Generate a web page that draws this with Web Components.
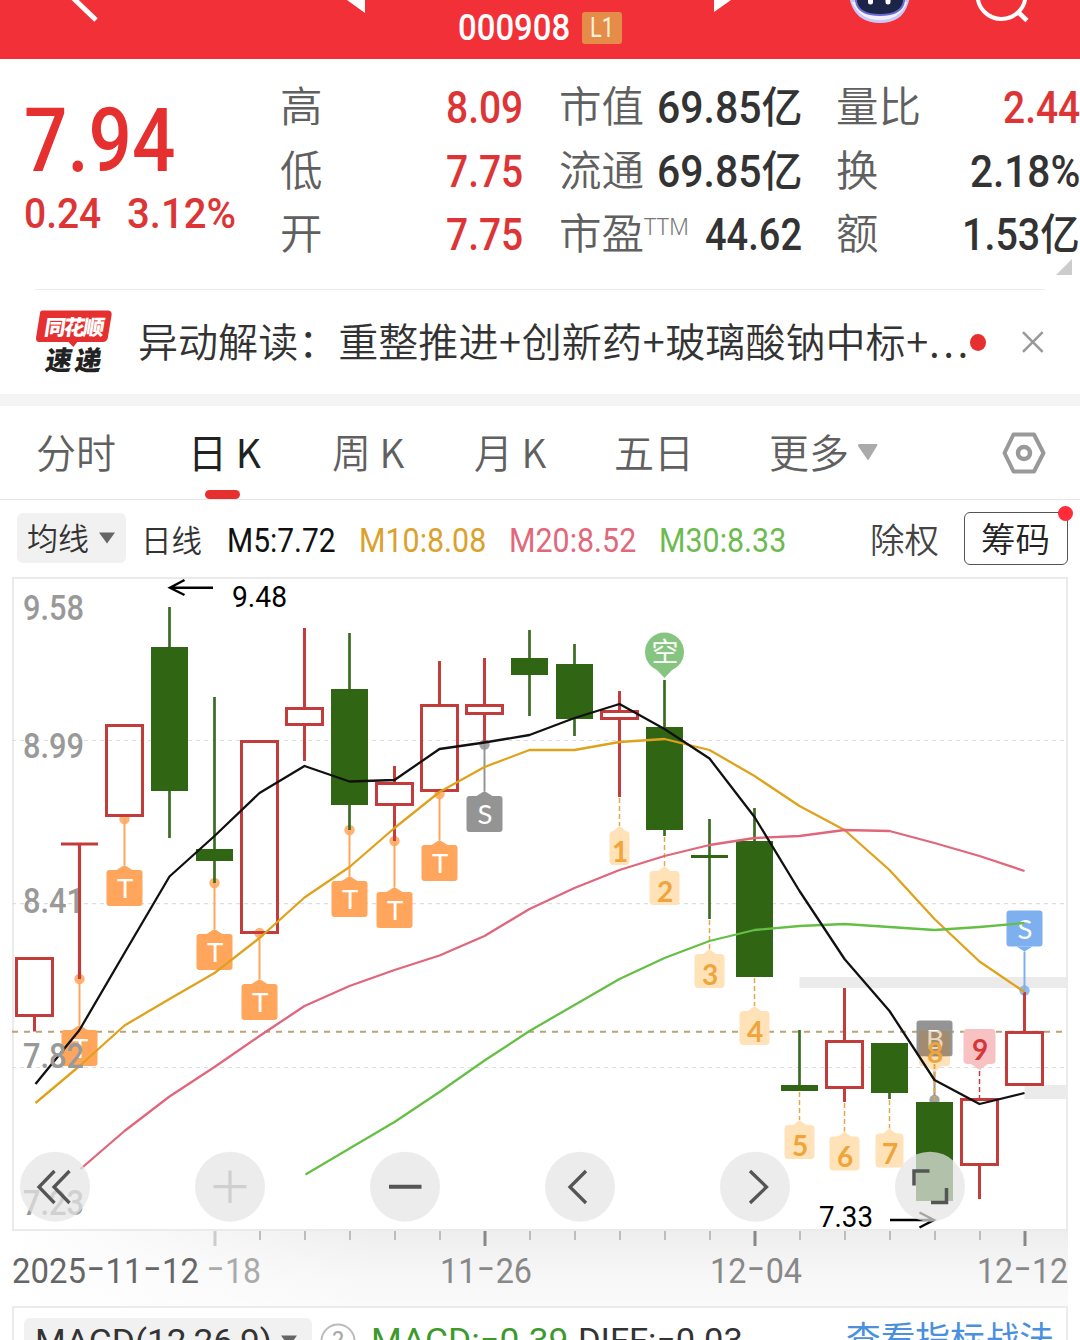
<!DOCTYPE html>
<html lang="zh-CN">
<head>
<meta charset="UTF-8">
<meta name="viewport" content="width=device-width, initial-scale=1.0">
<title>000908</title>
<style>
  html, body {
    margin: 0;
    padding: 0;
    background: #fff;
  }

  body {
    width: 1080px;
    height: 1340px;
    overflow: hidden;
    font-family: Roboto, "Noto Sans CJK SC", sans-serif;
    color: #333;
  }
</style>
</head>
<body>
<stock-page></stock-page>

<script>
// Text squeezed or stretched horizontally to a given width
class FitText extends HTMLElement {
  connectedCallback() {
    const width = Number(this.getAttribute("width"));
    this.attachShadow({ mode: "open" });
    this.shadowRoot.innerHTML = `
      <style>
        :host {
          display: block;
          flex: none;
          width: ${width}px;
          white-space: nowrap;
        }

        span {
          display: inline-block;
          transform-origin: 0 50%;
        }
      </style>
      <span><slot></slot></span>
    `;
    const span = this.shadowRoot.querySelector("span");
    span.style.transform = `scaleX(${width / span.offsetWidth})`;
  }
}

class AppBar extends HTMLElement {
  connectedCallback() {
    this.attachShadow({ mode: "open" });
    this.shadowRoot.innerHTML = `
      <style>
        :host {
          display: flex;
          height: 59px;
          background: #f23038;
          color: white;
          overflow: hidden;
        }

        svg {
          flex: none;
          height: 59px;
        }

        .title {
          display: flex;
          align-items: center;
          gap: 12px;
          width: 164px;
          height: 32px;
          margin: 12px 88px 0;
          font-size: 37px;
          font-weight: 500;
          line-height: 34px;
        }

        .level {
          width: 40px;
          height: 32px;
          border-radius: 3px;
          background: #e58c49;
          color: #fff3dc;
          font-size: 28px;
          font-weight: 400;
          line-height: 32px;
          display: flex;
          justify-content: center;
        }
      </style>

      <svg width="100" viewBox="0 0 100 59"><path d="M71 -4 L96 20" stroke="#fff" stroke-width="5" fill="none"/></svg>
      <svg width="30" viewBox="340 0 30 59" style="margin-left:240px"><path d="M347 0 H365 V13Z" fill="#fff"/></svg>
      <div class="title">
        <fit-text width="112">000908</fit-text>
        <span class="level"><fit-text width="24">L1</fit-text></span>
      </div>
      <svg width="25" viewBox="710 0 25 59"><path d="M714 0 H731 L714 12Z" fill="#fff"/></svg>
      <svg width="70" viewBox="845 0 70 59" style="margin-left:110px">
        <path d="M847 -10 L851 4 Q858 23 880 23 Q902 23 908 4 L912 -10Z" fill="#c9c8fa"/>
        <path d="M852 2 Q860 20 880 20 Q900 20 907 2Z" fill="#f3efff"/>
        <path d="M855 -10 V1 Q857 16 880 16 Q903 16 905 1 V-10Z" fill="#6a6ccf"/>
        <path d="M857 -10 V1 Q859 14 880 14 Q901 14 903 1 V-10Z" fill="#1c2448"/>
        <path d="M870.5 -3 V2 M888 -3 V2" stroke="#fff" stroke-width="5" stroke-linecap="round"/>
      </svg>
      <svg width="60" viewBox="975 0 60 59" style="margin-left:60px">
        <circle cx="1001.5" cy="-5" r="24" fill="none" stroke="#fff" stroke-width="4"/>
        <path d="M1017 11 L1027 20.5" stroke="#fff" stroke-width="4.5"/>
      </svg>
    `;
  }
}

class QuoteBoard extends HTMLElement {
  connectedCallback() {
    this.attachShadow({ mode: "open" });
    this.shadowRoot.innerHTML = `
      <style>
        :host {
          display: grid;
          grid-template-columns: 220px 243px 243px 243px;
          column-gap: 36px;
          height: 230px;
          box-sizing: border-box;
          padding: 16px 0 0 24px;
          position: relative;
        }

        .red { color: #dd3536; }

        .price {
          font-weight: 500;
          color: #e63030;
          line-height: 82px;
          padding-top: 25px;
          font-size: 89px;
        }

        .change {
          display: flex;
          gap: 26px;
          font-size: 43px;
          font-weight: 500;
          line-height: 62px;
          color: #dd3536;
        }

        .row {
          display: flex;
          justify-content: space-between;
          height: 63.5px;
          line-height: 67px;
          font-size: 43.5px;
          font-weight: 500;
        }

        .label {
          font-family: "Noto Sans CJK SC", sans-serif;
          font-size: 42.5px;
          font-weight: 350;
          color: #606060;
          line-height: 58px;
          display: flex;
        }

        sup {
          font-family: "Noto Sans", sans-serif;
          font-size: 23px;
          line-height: 49px;
          vertical-align: baseline;
          color: #777;
        }

        .corner {
          position: absolute;
          right: 8px;
          bottom: 14px;
          width: 0;
          height: 0;
          border-left: 16px solid transparent;
          border-bottom: 16px solid #ccc;
        }
      </style>

      <div>
        <div class="price"><fit-text width="151">7.94</fit-text></div>
        <div class="change"><fit-text width="77">0.24</fit-text><fit-text width="109">3.12%</fit-text></div>
      </div>
      <div>
        <div class="row"><span class="label">高</span><fit-text class="red" width="77">8.09</fit-text></div>
        <div class="row"><span class="label">低</span><fit-text class="red" width="77">7.75</fit-text></div>
        <div class="row"><span class="label">开</span><fit-text class="red" width="77">7.75</fit-text></div>
      </div>
      <div>
        <div class="row"><span class="label">市值</span><fit-text width="145">69.85亿</fit-text></div>
        <div class="row"><span class="label">流通</span><fit-text width="145">69.85亿</fit-text></div>
        <div class="row"><span class="label">市盈<sup><fit-text width="45">TTM</fit-text></sup></span><fit-text width="97">44.62</fit-text></div>
      </div>
      <div style="margin-left:-2px;margin-right:1px">
        <div class="row"><span class="label">量比</span><fit-text class="red" width="77">2.44</fit-text></div>
        <div class="row"><span class="label">换</span><fit-text width="110">2.18%</fit-text></div>
        <div class="row"><span class="label">额</span><fit-text width="118">1.53亿</fit-text></div>
      </div>
      <i class="corner"></i>
    `;
  }
}

class NewsFlash extends HTMLElement {
  connectedCallback() {
    this.attachShadow({ mode: "open" });
    this.shadowRoot.innerHTML = `
      <style>
        :host {
          display: block;
          height: 105px;
          border-bottom: 12px solid #f4f4f4;
        }

        .line {
          display: flex;
          align-items: center;
          height: 104px;
          margin: 0 35px;
          border-top: 1px solid #ececec;
        }

        fit-text {
          margin: -4px 0 0 25px;
          font-family: "Noto Sans CJK SC", sans-serif;
          font-size: 40px;
          font-weight: 350;
          line-height: 60px;
        }

        .plus { padding: 0 0.7px; }

        .dots { letter-spacing: 3.5px; }

        .dot {
          width: 17px;
          height: 17px;
          border-radius: 50%;
          background: #e63030;
          margin-left: -2px;
        }

        .close { margin-left: 35px; }
      </style>

      <div class="line">
        <svg width="79" height="70" viewBox="35 307 79 70">
          <path d="M43 310 H109 Q113 310 113 314 L109 338 Q108 342 104 342 H78 L74 347 L69 342 H39 Q36 342 36 338 L40 313 Q40 310 43 310Z" fill="#e63030"/>
          <g font-family="'Noto Sans CJK SC', sans-serif" font-weight="900" transform="skewX(-9)">
            <text x="96.5" y="334.5" font-size="21.5" fill="#fff" textLength="61">同花顺</text>
            <text x="103" y="370" font-size="27" fill="#222" textLength="57">速递</text>
          </g>
        </svg>
        <fit-text width="834">异动解读：重整推进<span class="plus">+</span>创新药<span class="plus">+</span>玻璃酸钠中标<span class="plus">+</span><span class="dots">...</span></fit-text>
        <i class="dot"></i>
        <svg class="close" width="24" height="24" viewBox="0 0 24 24"><path d="M2 2 L22 22 M22 2 L2 22" stroke="#999" stroke-width="2.6"/></svg>
      </div>
    `;
  }
}

class PeriodTabs extends HTMLElement {
  connectedCallback() {
    this.attachShadow({ mode: "open" });
    this.shadowRoot.innerHTML = `
      <style>
        :host {
          display: flex;
          height: 93px;
          border-bottom: 1px solid #e6e6e6;
          padding-left: 36px;
          font-family: "Noto Sans CJK SC", sans-serif;
          font-size: 40px;
          font-weight: 350;
          line-height: 90px;
          color: #606060;
        }

        .tab {
          display: flex;
          flex-direction: column;
          align-items: center;
          height: 93px;
        }

        .active {
          color: #222;
          font-weight: 400;
        }

        .active::after {
          content: "";
          width: 35px;
          height: 9px;
          margin: -6px 5px 0 0;
          border-radius: 5px;
          background: #e63030;
        }

        svg { flex: none; }
      </style>

      <span class="tab" style="width:80px"><fit-text width="80">分时</fit-text></span>
      <span class="tab active" style="margin-left:72px"><fit-text width="73">日 K</fit-text></span>
      <span class="tab" style="margin-left:71px"><fit-text width="72">周 K</fit-text></span>
      <span class="tab" style="margin-left:70px"><fit-text width="72">月 K</fit-text></span>
      <span class="tab" style="margin-left:68px"><fit-text width="80">五日</fit-text></span>
      <span class="tab" style="margin-left:75px"><fit-text width="80">更多</fit-text></span>
      <svg width="20" height="93" viewBox="0 0 20 93" style="margin-left:9px"><path d="M1 38 H19 Q20 38 19 40 L11 53 Q10 55 9 53 L0 40 Q0 38 1 38Z" fill="#aaa"/></svg>
      <svg width="46" height="93" viewBox="1001 406 46 93" style="margin-left:123px" fill="none" stroke="#999">
        <path d="M1013.5 434.5 H1034 L1043.5 453 L1034 471.5 H1013.5 L1004.5 453Z" stroke-width="4" stroke-linejoin="round"/>
        <circle cx="1024" cy="453" r="6" stroke-width="4.5"/>
      </svg>
    `;
  }
}

class MaLegend extends HTMLElement {
  connectedCallback() {
    this.attachShadow({ mode: "open" });
    this.shadowRoot.innerHTML = `
      <style>
        :host {
          display: flex;
          align-items: flex-start;
          height: 64px;
          padding: 13px 12px 0 17px;
          line-height: 56px;
          font-size: 33px;
          font-weight: 450;
        }

        .cjk {
          font-family: "Noto Sans CJK SC", sans-serif;
          font-weight: 350;
        }

        .picker {
          display: flex;
          align-items: center;
          width: 109px;
          height: 50px;
          box-sizing: border-box;
          padding-left: 10px;
          gap: 9px;
          border-radius: 6px;
          background: #f1f1f1;
          font-size: 31px;
        }

        .chips {
          position: relative;
          box-sizing: border-box;
          width: 104px;
          height: 53px;
          margin: -1px 0 0 25px;
          padding-left: 16px;
          border: 1.5px solid #555;
          border-radius: 6px;
          font-size: 34px;
          line-height: 50px;
          color: #222;
        }

        .chips i {
          position: absolute;
          top: -7px;
          right: -6px;
          width: 15px;
          height: 15px;
          border-radius: 50%;
          background: #ff2b39;
        }
      </style>

      <div class="picker cjk"><fit-text width="62" style="line-height:46px;margin-top:-2px">均线</fit-text>
        <svg width="18" height="12" viewBox="0 0 18 12"><path d="M1 0.5 H17 L9 11.5Z" fill="#666"/></svg>
      </div>
      <fit-text class="cjk" width="61" style="margin-left:15px;font-size:31px;line-height:52px">日线</fit-text>
      <fit-text width="109" style="margin-left:25px;color:#111">M5:7.72</fit-text>
      <fit-text width="127" style="margin-left:23px;color:#dba12b">M10:8.08</fit-text>
      <fit-text width="127" style="margin-left:23px;color:#e1687b">M20:8.52</fit-text>
      <fit-text width="127" style="margin-left:23px;color:#6cba50">M30:8.33</fit-text>
      <fit-text class="cjk" width="69" style="margin-left:84px;font-size:34px;line-height:51px;color:#444">除权</fit-text>
      <div class="chips cjk"><fit-text width="69">筹码</fit-text><i></i></div>
    `;
  }
}

// [type, high, body top, body bottom, low], one entry per trading day
const CANDLES = [
  ["up", 957, 957, 1017, 1031.5],
  ["flat", 842, 842, 846, 979],
  ["up", 724, 724, 817, 817],
  ["down", 607, 647, 791, 838],
  ["down", 697, 849, 861, 883],
  ["up", 740, 740, 934, 934],
  ["up", 628, 707, 726, 761],
  ["down", 633, 689, 805, 830],
  ["up", 766, 782, 806, 841],
  ["up", 661, 704, 792, 792],
  ["up", 658, 704, 715, 743],
  ["down", 630, 658, 675, 716],
  ["down", 644, 664, 719, 736],
  ["up", 691, 710, 720, 797],
  ["down", 680, 727, 830, 836],
  ["down", 819, 855, 858, 919],
  ["down", 808, 841, 977, 977],
  ["down", 1030, 1085, 1091, 1091],
  ["up", 988, 1040, 1089, 1102],
  ["down", 1043, 1043, 1093, 1099],
  ["down", 1102, 1102, 1201, 1201],
  ["up", 1098, 1098, 1166, 1199],
  ["up", 992, 1031, 1086, 1086]
];

// Moving averages: first day index, colour, y values
const AVERAGES = [
  [0, "#e0a21d", [1103, 1066, 1025.5, 999, 973, 938, 897.5, 867, 828, 792, 767, 750, 750, 742, 739, 750, 776, 806, 830, 870, 919, 961.5, 992]],
  [1, "#e0667c", [1169, 1131, 1096.5, 1067, 1036, 1006, 986, 970, 955.5, 936, 909, 888, 870, 856, 845, 838, 836, 830, 831, 843, 856, 871]],
  [6, "#66bf45", [1174.5, 1148.5, 1122, 1092, 1060.5, 1031, 1005, 979, 958, 941, 930, 926, 924, 927, 930, 927, 923]],
  [0, "#111", [1084, 1030, 953, 876.5, 836, 793, 766, 781.5, 780, 749, 742.5, 735, 718, 704, 729, 758.5, 817, 891, 959, 1011, 1080, 1104, 1093]]
];

// [day, letter, colour, dot y, box top]
const FLAGS = [
  [1, "T", "#ffa65c", 979, 1030],
  [2, "T", "#ffa65c", 819, 870],
  [4, "T", "#ffa65c", 883, 934],
  [5, "T", "#ffa65c", 933, 984],
  [7, "T", "#ffa65c", 830, 881],
  [8, "T", "#ffa65c", 841, 892],
  [9, "T", "#ffa65c", 794, 845],
  [10, "S", "#949494", 744.5, 796],
  [20, "B", "#949494", 1100, 1020.5],
  [22, "S", "#7eb0ef", 990.5, 910.5]
];

// [day, number, box width, line start, tip y]
const COUNTS = [
  [13, "1", 20, 798, 826],
  [14, "2", 30, 837, 866],
  [15, "3", 30, 920, 949],
  [16, "4", 30, 978, 1006],
  [17, "5", 30, 1092, 1120],
  [18, "6", 30, 1103, 1131.5],
  [19, "7", 28, 1100, 1128.5]
];

const dayX = (i) => 34.5 + i * 45;

function candle([type, high, top, bottom, low], i) {
  const x = dayX(i);
  if (type === "down") {
    return `<path d="M${x} ${high} V${low}" stroke="#3a6b22" stroke-width="2.7"/>
      <rect x="${x - 18.5}" y="${top}" width="37" height="${bottom - top}" fill="#306514"/>`;
  }
  if (type === "flat") {
    return `<path d="M${x - 18.5} ${top + 2} h37 M${x} ${top + 2} V${low}" stroke="#c23c3c" stroke-width="3.2" fill="none"/>`;
  }
  return `<path d="M${x} ${high} V${top} M${x} ${bottom} V${low}" stroke="#c43c3c" stroke-width="3"/>
    <rect x="${x - 18}" y="${top + 1.5}" width="36" height="${bottom - top - 3}" fill="none" stroke="#c23c3c" stroke-width="3"/>`;
}

function average([first, color, ys]) {
  const points = ys.map((y, i) => `${dayX(first + i) + (i ? 0 : 1)},${y}`).join(" ");
  return `<polyline points="${points}" fill="none" stroke="${color}" stroke-width="2.3" stroke-linejoin="round"/>`;
}

function flag([i, letter, color, dot, top]) {
  const x = dayX(i);
  const below = dot < top;
  const edge = below ? top : top + 36;
  const tip = below ? top - 5 : top + 41;
  return `<path d="M${x} ${dot} V${tip}" stroke="${color}" stroke-width="2"/>
    <circle cx="${x}" cy="${dot}" r="5.2" fill="${color}" opacity="0.85"/>
    <rect x="${x - 18}" y="${top}" width="36" height="36" rx="3" fill="${color}"/>
    <path d="M${x - 8} ${edge} L${x} ${tip} L${x + 8} ${edge}Z" fill="${color}"/>
    <text x="${x + 0.5}" y="${top + 28}" font-family="Lato" font-size="27.5" fill="#fff" text-anchor="middle">${letter}</text>`;
}

function count([i, n, w, start, tip]) {
  const x = dayX(i);
  return `<path d="M${x} ${start} V${tip}" stroke="#e0a94b" stroke-width="1.5" stroke-dasharray="5 3"/>
    <rect x="${x - w / 2}" y="${tip + 5}" width="${w}" height="34" rx="4" fill="#ffe2b8"/>
    <path d="M${x - 7} ${tip + 5.5} L${x} ${tip} L${x + 7} ${tip + 5.5}Z" fill="#ffe2b8"/>
    <text x="${x + 0.5}" y="${tip + 35.5}" font-family="Lato" font-weight="700" font-size="28" fill="#efa53a" text-anchor="middle">${n}</text>`;
}

function tick(i) {
  const major = i % 6 === 4;
  const color = i === 4 ? "#ccc" : major ? "#888" : "#bdbdbd";
  return `<path d="M${dayX(i) + 0.5} 1231 v${major ? 15 : 9}" stroke="${color}" stroke-width="${major ? 3 : 2}"/>`;
}

function date(text, x, width, color) {
  const body = text.replace(/-/g, '<tspan font-family="Inter" font-size="46" font-weight="300">-</tspan>');
  return `<text x="${x}" y="1283" textLength="${width}" lengthAdjust="spacingAndGlyphs" fill="${color}">${body}</text>`;
}

class KChart extends HTMLElement {
  connectedCallback() {
    const buttons = [55, 230, 405, 580, 755, 930];
    this.attachShadow({ mode: "open" });
    this.shadowRoot.innerHTML = `
      <style>
        :host {
          display: block;
          height: 729px;
        }

        svg {
          display: block;
          font-family: Roboto, sans-serif;
        }
      </style>

      <svg width="1080" height="729" viewBox="0 577 1080 729">
        <defs>
          <linearGradient id="down" x1="0" y1="0" x2="0" y2="1">
            <stop offset="0" stop-color="#eeeeee"/>
            <stop offset="0.6" stop-color="#f7f7f7"/>
            <stop offset="1" stop-color="#fafafa"/>
          </linearGradient>
          <linearGradient id="side">
            <stop offset="0" stop-color="#fff"/>
            <stop offset="0.35" stop-color="#fff" stop-opacity="0"/>
          </linearGradient>
        </defs>

        <rect x="12" y="1231" width="1056" height="75" fill="url(#down)"/>
        <rect x="12" y="1231" width="1056" height="75" fill="url(#side)"/>
        <rect x="13" y="578" width="1054" height="652" fill="#fff" stroke="#ebebeb" stroke-width="2"/>

        <path d="M12 740.5 H1066 M12 903.7 H1066 M12 1067.5 H1066" stroke="#dedede" stroke-width="1.2" stroke-dasharray="4 4"/>
        <path d="M799.5 977 H1068 V988 H799.5Z M1024.5 1085 H1068 V1099 H1024.5Z" fill="#ebebeb"/>
        <path d="M12 1031.7 H1066" stroke="#b9a377" stroke-width="2" stroke-dasharray="6 6"/>

        ${FLAGS.map(flag).join("")}
        ${CANDLES.map(candle).join("")}
        ${COUNTS.map(count).join("")}

        <g>
          <path d="M919 1056.500 H950 V1063 Q950 1066 947 1066 H942 L934.500 1072 L927 1066 H922 Q919 1066 919 1063Z" fill="#ffe2b8"/>
          <rect x="919" y="1031" width="31" height="25.500" rx="3" fill="#c07a20" opacity="0.3"/>
          <path d="M934.5 1064 V1100" stroke="#e0a94b" stroke-width="2" stroke-dasharray="5 3"/>
          <text x="935" y="1062.5" font-family="Lato" font-weight="700" font-size="28" fill="#efa53a" text-anchor="middle">8</text>
        </g>
        <g>
          <rect x="963.5" y="1029" width="32" height="35" rx="4" fill="#f8c2c3"/>
          <path d="M971 1064 L979.5 1070 L988 1064Z" fill="#f8c2c3"/>
          <path d="M979.5 1071 V1098" stroke="#bb3d42" stroke-width="1.5" stroke-dasharray="5 3"/>
          <text x="980" y="1059.5" font-family="Lato" font-weight="700" font-size="28" fill="#d8353a" text-anchor="middle">9</text>
        </g>
        <g>
          <path d="M656 669 L664.5 678 L673 669Z" fill="#86c580"/>
          <circle cx="664.5" cy="652" r="19.5" fill="#86c580"/>
          <text x="665" y="662" font-family="'Noto Sans CJK SC', sans-serif" font-size="27" fill="#fff" text-anchor="middle">空</text>
        </g>

        ${AVERAGES.map(average).join("")}

        <g font-size="34.5" font-weight="500" fill="#999">
          <text x="23" y="619.5" textLength="61" lengthAdjust="spacingAndGlyphs">9.58</text>
          <text x="23" y="758" textLength="61" lengthAdjust="spacingAndGlyphs">8.99</text>
          <text x="23" y="913" textLength="61" lengthAdjust="spacingAndGlyphs">8.41</text>
          <text x="23" y="1068" textLength="61" lengthAdjust="spacingAndGlyphs">7.82</text>
          <text x="23" y="1215" textLength="61" lengthAdjust="spacingAndGlyphs">7.23</text>
        </g>

        <g font-size="30" fill="#000">
          <text x="232" y="607" textLength="55" lengthAdjust="spacingAndGlyphs">9.48</text>
          <text x="819" y="1227" textLength="54" lengthAdjust="spacingAndGlyphs">7.33</text>
          <path d="M213 587.7 H170 M184.5 580 L170 587.7 L184.5 595 M890 1220 H934 M919.5 1212.5 L934 1220 L919.5 1227.5" fill="none" stroke="#000" stroke-width="2.4"/>
        </g>

        ${buttons.map((x) => `<circle cx="${x}" cy="1186.7" r="35" fill="#e4e4e4" opacity="0.72"/>`).join("")}
        <g fill="none" stroke="#555" stroke-width="3.3">
          <path d="M54.5 1171 L39 1187 L54.5 1203 M69.5 1171 L54 1187 L69.5 1203"/>
          <path d="M230 1170.5 V1203 M213.5 1186.7 H246.5" stroke="#cfcfcf"/>
          <path d="M389 1186.7 H421.5" stroke-width="4"/>
          <path d="M586 1171 L570 1187 L586 1203"/>
          <path d="M750 1171 L766.5 1187 L750 1203"/>
          <path d="M914 1185.5 V1171 H929.5 M946.5 1188 V1202.5 H931" stroke-width="3.5"/>
        </g>

        ${CANDLES.map((c, i) => (i >= 4 ? tick(i) : "")).join("")}
        <g font-size="35" font-weight="400">
          ${date("2025-11-12", 12, 187, "#666")}
          ${date("-18", 206, 55, "#aaa")}
          ${date("11-26", 440, 92, "#888")}
          ${date("12-04", 710, 92, "#888")}
          ${date("12-12", 977, 91, "#888")}
        </g>
      </svg>
    `;
  }
}

class IndicatorBar extends HTMLElement {
  connectedCallback() {
    this.attachShadow({ mode: "open" });
    this.shadowRoot.innerHTML = `
      <style>
        :host {
          display: block;
          height: 34px;
          overflow: hidden;
        }

        .panel {
          display: flex;
          margin: 0 12px;
          height: 80px;
          box-sizing: border-box;
          padding: 10px 12px 0 10px;
          border: 2px solid #ebebeb;
          font-size: 33px;
          font-weight: 450;
          line-height: 46px;
        }

        .picker {
          display: flex;
          align-items: center;
          box-sizing: border-box;
          width: 288px;
          height: 50px;
          padding-left: 11px;
          gap: 8px;
          border-radius: 6px;
          background: #f1f1f1;
        }

        .picker svg { margin-top: -5px; }

        .minus {
          font-family: Inter;
          font-size: 40px;
          font-weight: 400;
          line-height: 0;
        }

        .link {
          margin-left: auto;
          font-family: "Noto Sans CJK SC", sans-serif;
          font-weight: 400;
          color: #4a90dd;
        }
      </style>

      <div class="panel">
        <div class="picker"><fit-text width="237" style="margin-top:-3px">MACD(12,26,9)</fit-text>
          <svg width="18" height="12" viewBox="0 0 18 12"><path d="M1 0.5 H17 L9 11.5Z" fill="#666"/></svg>
        </div>
        <svg width="36" height="50" viewBox="0 0 36 50" style="margin:0 0 0 8px">
          <circle cx="18" cy="23" r="16.5" fill="none" stroke="#bbb" stroke-width="2"/>
          <text x="18" y="32" font-family="Roboto" font-weight="400" font-size="25" fill="#aaa" text-anchor="middle">?</text>
        </svg>
        <fit-text width="197" style="margin-left:15px;color:#3c9a2c">MACD:<span class="minus">-</span>0.39</fit-text>
        <fit-text width="165" style="margin-left:10px">DIFF:<span class="minus">-</span>0.03</fit-text>
        <fit-text class="link" width="208" style="font-size:34px;line-height:38px">查看指标战法</fit-text>
      </div>
    `;
  }
}

class StockPage extends HTMLElement {
  connectedCallback() {
    this.attachShadow({ mode: "open" });
    this.shadowRoot.innerHTML = `
      <style>
        :host {
          display: flex;
          flex-direction: column;
          width: 1080px;
          height: 1340px;
          overflow: hidden;
          background: #fff;
        }
      </style>
      <app-bar></app-bar>
      <quote-board></quote-board>
      <news-flash></news-flash>
      <period-tabs></period-tabs>
      <ma-legend></ma-legend>
      <k-chart></k-chart>
      <indicator-bar></indicator-bar>
    `;
  }
}

customElements.define("fit-text", FitText);
customElements.define("app-bar", AppBar);
customElements.define("quote-board", QuoteBoard);
customElements.define("news-flash", NewsFlash);
customElements.define("period-tabs", PeriodTabs);
customElements.define("ma-legend", MaLegend);
customElements.define("k-chart", KChart);
customElements.define("indicator-bar", IndicatorBar);
customElements.define("stock-page", StockPage);
</script>
</body>
</html>
